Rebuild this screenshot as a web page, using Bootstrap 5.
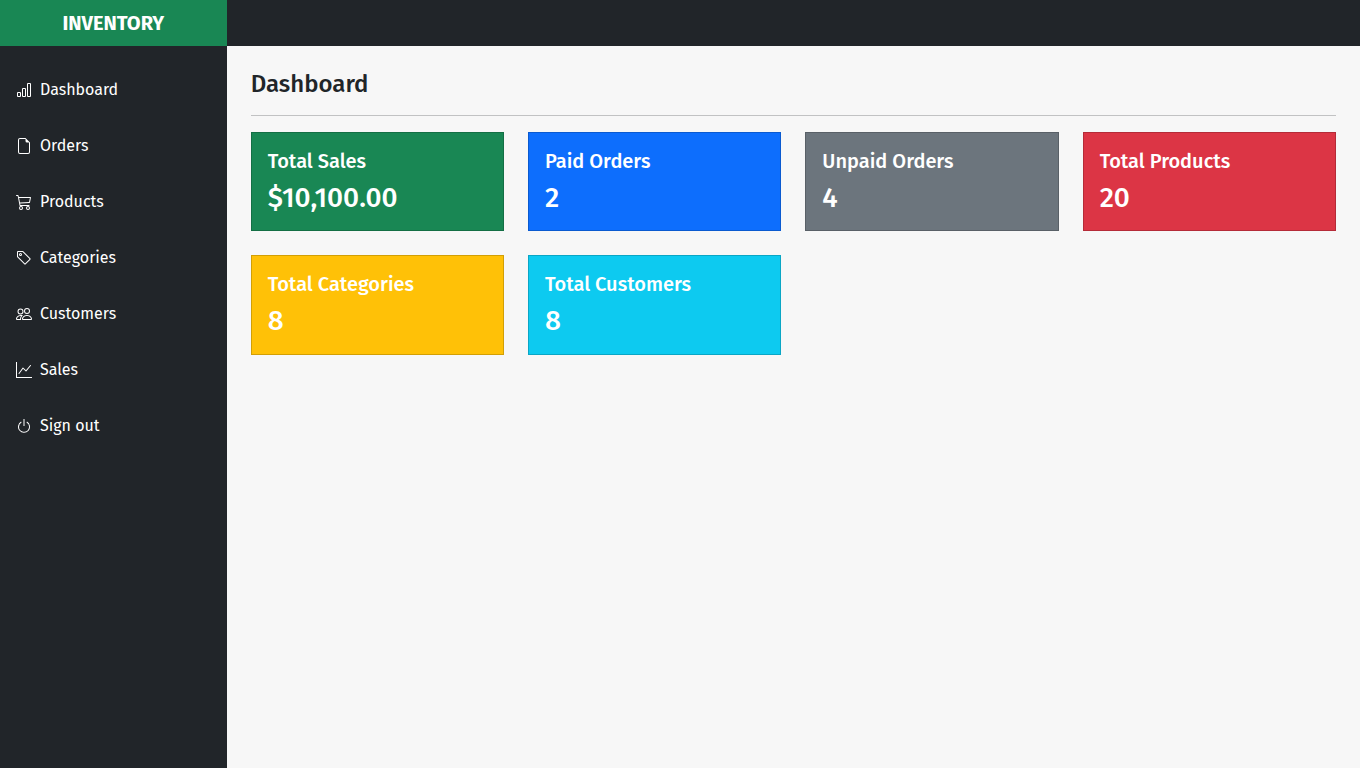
<!DOCTYPE html>
<html lang="en">
<head>
<meta charset="utf-8">
<meta name="viewport" content="width=device-width, initial-scale=1">
<title>Inventory</title>
<link href="https://cdn.jsdelivr.net/npm/bootstrap@5.3.0/dist/css/bootstrap.min.css" rel="stylesheet">
<style>
  body { font-family: "Fira Sans", "Noto Sans", "Open Sans", sans-serif; background: #f7f7f7; }
  .top-strip { height: 46px; }
  .stat-card { --bs-card-border-radius: 0; --bs-card-border-color: rgba(0, 0, 0, .175); color: #fff; }
</style>
</head>
<body>
<div class="container-fluid p-0">
  <div class="row g-0 min-vh-100">
    <aside class="col-2 bg-dark text-white">
      <div class="top-strip bg-success d-flex align-items-center justify-content-center">
        <a href="#" class="fs-5 fw-bold text-white text-decoration-none">INVENTORY</a>
      </div>
      <nav class="nav flex-column pt-3" aria-label="Main">
        <a href="#" class="nav-link text-white p-3 d-flex align-items-center gap-2">
          <svg width="16" height="16" fill="currentColor" viewBox="0 0 16 16" aria-hidden="true"><path d="M4 11H2v3h2v-3zm5-4H7v7h2V7zm5-5v12h-2V2h2zm-2-1a1 1 0 0 0-1 1v12a1 1 0 0 0 1 1h2a1 1 0 0 0 1-1V2a1 1 0 0 0-1-1h-2zM6 7a1 1 0 0 1 1-1h2a1 1 0 0 1 1 1v7a1 1 0 0 1-1 1H7a1 1 0 0 1-1-1V7zm-5 4a1 1 0 0 1 1-1h2a1 1 0 0 1 1 1v3a1 1 0 0 1-1 1H2a1 1 0 0 1-1-1v-3z"/></svg>
          <span>Dashboard</span></a>
        <a href="#" class="nav-link text-white p-3 d-flex align-items-center gap-2">
          <svg width="16" height="16" fill="currentColor" viewBox="0 0 16 16" aria-hidden="true"><path d="M14 4.5V14a2 2 0 0 1-2 2H4a2 2 0 0 1-2-2V2a2 2 0 0 1 2-2h5.5L14 4.5zm-3 0A1.5 1.5 0 0 1 9.5 3V1H4a1 1 0 0 0-1 1v12a1 1 0 0 0 1 1h8a1 1 0 0 0 1-1V4.5h-2z"/></svg>
          <span>Orders</span></a>
        <a href="#" class="nav-link text-white p-3 d-flex align-items-center gap-2">
          <svg width="16" height="16" fill="currentColor" viewBox="0 0 16 16" aria-hidden="true"><path d="M0 1.5A.5.5 0 0 1 .5 1H2a.5.5 0 0 1 .485.379L2.89 3H14.5a.5.5 0 0 1 .49.598l-1 5a.5.5 0 0 1-.465.401l-9.397.472L4.415 11H13a.5.5 0 0 1 0 1H4a.5.5 0 0 1-.491-.408L2.01 3.607 1.61 2H.5a.5.5 0 0 1-.5-.5zM3.102 4l.84 4.479 9.144-.459L13.89 4H3.102zM5 12a2 2 0 1 0 0 4 2 2 0 0 0 0-4zm7 0a2 2 0 1 0 0 4 2 2 0 0 0 0-4zm-7 1a1 1 0 1 1 0 2 1 1 0 0 1 0-2zm7 0a1 1 0 1 1 0 2 1 1 0 0 1 0-2z"/></svg>
          <span>Products</span></a>
        <a href="#" class="nav-link text-white p-3 d-flex align-items-center gap-2">
          <svg width="16" height="16" fill="currentColor" viewBox="0 0 16 16" aria-hidden="true"><path d="M6 4.5a1.5 1.5 0 1 1-3 0 1.5 1.5 0 0 1 3 0zm-1 0a.5.5 0 1 0-1 0 .5.5 0 0 0 1 0z"/><path d="M2 1h4.586a1 1 0 0 1 .707.293l7 7a1 1 0 0 1 0 1.414l-4.586 4.586a1 1 0 0 1-1.414 0l-7-7A1 1 0 0 1 1 6.586V2a1 1 0 0 1 1-1zm0 5.586 7 7L13.586 9l-7-7H2v4.586z"/></svg>
          <span>Categories</span></a>
        <a href="#" class="nav-link text-white p-3 d-flex align-items-center gap-2">
          <svg width="16" height="16" fill="currentColor" viewBox="0 0 16 16" aria-hidden="true"><path d="M15 14s1 0 1-1-1-4-5-4-5 3-5 4 1 1 1 1h8zm-7.978-1A.261.261 0 0 1 7 12.996c.001-.264.167-1.03.76-1.72C8.312 10.629 9.282 10 11 10c1.717 0 2.687.63 3.24 1.276.593.69.758 1.457.76 1.72l-.008.002a.274.274 0 0 1-.014.002H7.022zM11 7a2 2 0 1 0 0-4 2 2 0 0 0 0 4zm3-2a3 3 0 1 1-6 0 3 3 0 0 1 6 0zM6.936 9.28a5.88 5.88 0 0 0-1.23-.247A7.35 7.35 0 0 0 5 9c-4 0-5 3-5 4 0 .667.333 1 1 1h4.216A2.238 2.238 0 0 1 5 13c0-1.01.377-2.042 1.09-2.904.243-.294.526-.569.846-.816zM4.92 10A5.493 5.493 0 0 0 4 13H1c0-.26.164-1.03.76-1.724.545-.636 1.492-1.256 3.16-1.275zM1.5 5.5a3 3 0 1 1 6 0 3 3 0 0 1-6 0zm3-2a2 2 0 1 0 0 4 2 2 0 0 0 0-4z"/></svg>
          <span>Customers</span></a>
        <a href="#" class="nav-link text-white p-3 d-flex align-items-center gap-2">
          <svg width="16" height="16" fill="currentColor" viewBox="0 0 16 16" aria-hidden="true"><path d="M0 0h1v15h15v1H0V0zm14.817 3.113a.5.5 0 0 1 .07.704l-4.5 5.5a.5.5 0 0 1-.74.037L7.06 6.767l-3.656 5.027a.5.5 0 0 1-.808-.588l4-5.5a.5.5 0 0 1 .758-.06l2.609 2.61 4.15-5.073a.5.5 0 0 1 .704-.07z"/></svg>
          <span>Sales</span></a>
        <a href="#" class="nav-link text-white p-3 d-flex align-items-center gap-2">
          <svg width="16" height="16" fill="currentColor" viewBox="0 0 16 16" aria-hidden="true"><path d="M7.5 1v7h1V1h-1z"/><path d="M3 8.812a4.999 4.999 0 0 1 2.578-4.375l-.485-.874A6 6 0 1 0 11 3.616l-.501.865A5 5 0 1 1 3 8.812z"/></svg>
          <span>Sign out</span></a>
      </nav>
    </aside>
    <div class="col-10">
      <header class="top-strip bg-dark"></header>
      <main class="p-4">
        <h1 class="h4 mb-0">Dashboard</h1>
        <hr>
        <div class="row row-cols-4 g-4">
          <div class="col"><div class="card stat-card bg-success"><div class="card-body">
            <h2 class="h5 card-title">Total Sales</h2><p class="h3 mb-0">$10,100.00</p></div></div></div>
          <div class="col"><div class="card stat-card bg-primary"><div class="card-body">
            <h2 class="h5 card-title">Paid Orders</h2><p class="h3 mb-0">2</p></div></div></div>
          <div class="col"><div class="card stat-card bg-secondary"><div class="card-body">
            <h2 class="h5 card-title">Unpaid Orders</h2><p class="h3 mb-0">4</p></div></div></div>
          <div class="col"><div class="card stat-card bg-danger"><div class="card-body">
            <h2 class="h5 card-title">Total Products</h2><p class="h3 mb-0">20</p></div></div></div>
          <div class="col"><div class="card stat-card bg-warning"><div class="card-body">
            <h2 class="h5 card-title">Total Categories</h2><p class="h3 mb-0">8</p></div></div></div>
          <div class="col"><div class="card stat-card bg-info"><div class="card-body">
            <h2 class="h5 card-title">Total Customers</h2><p class="h3 mb-0">8</p></div></div></div>
        </div>
      </main>
    </div>
  </div>
</div>
<script src="https://cdn.jsdelivr.net/npm/bootstrap@5.3.0/dist/js/bootstrap.bundle.min.js"></script>
</body>
</html>
